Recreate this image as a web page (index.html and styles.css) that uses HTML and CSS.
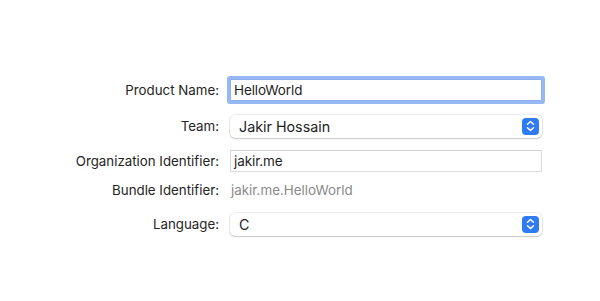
FILE: index.html
```html
<!DOCTYPE html>
<html>
<head>
<meta charset="utf-8">
<link rel="stylesheet" href="styles.css">
</head>
<body>
<div class="form">
  <div class="row r1">
    <div class="label">Product Name:</div>
    <div class="field focus">HelloWorld</div>
  </div>
  <div class="row r2">
    <div class="label">Team:</div>
    <div class="popup"><span class="pv">Jakir Hossain</span><span class="stepper"><svg width="9" height="12" viewBox="0 0 9 12"><path d="M1.5 4.2 L4.5 1.5 L7.5 4.2 M1.5 7.8 L4.5 10.5 L7.5 7.8" fill="none" stroke="#fff" stroke-width="1.5" stroke-linecap="round" stroke-linejoin="round"/></svg></span></div>
  </div>
  <div class="row r3">
    <div class="label">Organization Identifier:</div>
    <div class="field">jakir.me</div>
  </div>
  <div class="row r4">
    <div class="label">Bundle Identifier:</div>
    <div class="static">jakir.me.HelloWorld</div>
  </div>
  <div class="row r5">
    <div class="label">Language:</div>
    <div class="popup"><span class="pv">C</span><span class="stepper"><svg width="9" height="12" viewBox="0 0 9 12"><path d="M1.5 4.2 L4.5 1.5 L7.5 4.2 M1.5 7.8 L4.5 10.5 L7.5 7.8" fill="none" stroke="#fff" stroke-width="1.5" stroke-linecap="round" stroke-linejoin="round"/></svg></span></div>
  </div>
</div>
</body>
</html>
```
FILE: styles.css
```css
html, body {
  margin: 0;
  padding: 0;
  background: #ffffff;
  width: 600px;
  height: 301px;
  overflow: hidden;
}
body {
  font-family: "Inter", "Liberation Sans", sans-serif;
  color: #262626;
  -webkit-font-smoothing: antialiased;
}
.form {
  padding-top: 72px;
  display: grid;
  grid-template-columns: 219px 312px;
  grid-template-rows: 36px 36px 34px 24px 44px;
  column-gap: 11px;
}
.row {
  display: contents;
}
.label {
  align-self: center;
  justify-self: end;
  font-size: 13.3px;
  color: #242424;
}
.field {
  align-self: center;
  height: 22px;
  box-sizing: border-box;
  border: 1px solid #dcdcdc;
  border-top-color: #d2d2d2;
  background: #fff;
  padding-left: 3px;
  font-size: 13.5px;
  line-height: 20px;
  color: #1e1e1e;
  letter-spacing: -0.1px;
}
.field.focus {
  box-shadow: 0 0 0 3px #96b8f4;
  border-color: #8fb0ee;
  border-radius: 1px;
}
.static {
  align-self: center;
  padding-left: 1px;
  font-size: 13.4px;
  color: #8a8a8a;
}
.popup {
  align-self: center;
  height: 23px;
  box-sizing: border-box;
  display: flex;
  align-items: center;
  justify-content: space-between;
  background: #fff;
  border-radius: 5px;
  box-shadow: 0 0 0 0.5px rgba(0,0,0,0.14), 0 1px 1.5px rgba(0,0,0,0.16);
  padding: 0 3px 0 9px;
}
.pv {
  font-size: 14.3px;
  color: #1e1e1e;
}
.stepper {
  width: 17px;
  height: 17px;
  border-radius: 4px;
  background: #2f7bf5;
  display: flex;
  align-items: center;
  justify-content: center;
}
.stepper svg {
  display: block;
}
```
